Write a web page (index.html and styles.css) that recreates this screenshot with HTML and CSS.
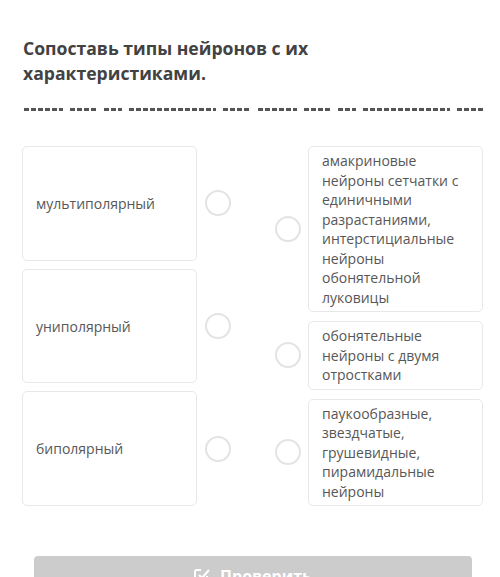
FILE: index.html
```html
<!DOCTYPE html>
<html lang="ru">
<head>
<meta charset="utf-8">
<link rel="stylesheet" href="styles.css">
</head>
<body>
<div class="page">
  <h1 class="title">Сопоставь типы нейронов с их характеристиками.</h1>
  <div class="dashes">
    <span class="d" style="width:39px"></span>
    <span class="d" style="width:27px"></span>
    <span class="d" style="width:18px"></span>
    <span class="d" style="width:87px"></span>
    <span class="d" style="width:26px"></span>
    <span class="d gapl" style="width:39px"></span>
    <span class="d" style="width:27px"></span>
    <span class="d" style="width:18px"></span>
    <span class="d" style="width:87px"></span>
    <span class="d" style="width:26px"></span>
  </div>
  <div class="match">
    <div class="col left">
      <div class="lrow"><div class="card lcard">мультиполярный</div><span class="dot"></span></div>
      <div class="lrow"><div class="card lcard">униполярный</div><span class="dot"></span></div>
      <div class="lrow"><div class="card lcard">биполярный</div><span class="dot"></span></div>
    </div>
    <div class="col right">
      <div class="rrow"><span class="dot"></span><div class="card rcard">амакриновые нейроны сетчатки с единичными разрастаниями, интерстициальные нейроны обонятельной луковицы</div></div>
      <div class="rrow"><span class="dot"></span><div class="card rcard">обонятельные нейроны с двумя отростками</div></div>
      <div class="rrow"><span class="dot"></span><div class="card rcard">паукообразные, звездчатые, грушевидные, пирамидальные нейроны</div></div>
    </div>
  </div>
  <div class="btn">
    <svg class="ico" width="16" height="16" viewBox="0 0 16 16" fill="none" stroke="#fff" stroke-width="2"><path d="M13 9v4.5a1.5 1.5 0 0 1-1.5 1.5h-9A1.5 1.5 0 0 1 1 13.5v-9A1.5 1.5 0 0 1 2.5 3H7"/><path d="M5 8l3 3 7-8"/></svg>
    <span class="btxt">Проверить</span>
  </div>
</div>
</body>
</html>
```
FILE: styles.css
```css
* { box-sizing: border-box; }
html, body { margin: 0; padding: 0; background: #fff; }
body { font-family: "Open Sans", "Noto Sans", sans-serif; color: #555; }
.page { width: 500px; padding: 36px 17px 0 22px; }
.title {
  margin: 0 0 0 1px;
  font-size: 17.6px;
  line-height: 25px;
  font-weight: 700;
  color: #424242;
  width: 330px;
}
.dashes {
  display: flex;
  gap: 7px;
  margin: 22px 0 0 2px;
  height: 3px;
}
.d {
  height: 3px;
  background: repeating-linear-gradient(90deg, #555 0 5px, transparent 5px 7px);
}
.d.gapl { margin-left: 2px; }
.match {
  display: flex;
  justify-content: space-between;
  margin-top: 35px;
}
.col { display: flex; flex-direction: column; }
.left { gap: 8px; }
.right { gap: 9px; }
.lrow { flex: 1; display: flex; align-items: center; gap: 8px; }
.rrow { display: flex; align-items: center; gap: 7px; }
.card {
  width: 175px;
  background: #fff;
  border: 1px solid #e8e8e8;
  border-radius: 5px;
  font-size: 14px;
  color: #575757;
}
.lcard {
  align-self: stretch;
  display: flex;
  align-items: center;
  padding: 0 13px;
}
.rcard {
  padding: 4px 10px 4px 13px;
  line-height: 19.5px;
}
.dot {
  width: 26px;
  height: 26px;
  border: 2px solid #e3e3e3;
  border-radius: 50%;
  flex: none;
}
.btn {
  margin: 50px 0 0 12px;
  width: 438px;
  height: 48px;
  background: #cccccc;
  border-radius: 4px;
  display: flex;
  align-items: flex-start;
  justify-content: center;
  gap: 10px;
  color: #fff;
  font-weight: 700;
  font-size: 16px;
  line-height: 16px;
  padding-top: 11px;
}
.ico { flex: none; }
.btxt { padding-top: 1px; }
```
